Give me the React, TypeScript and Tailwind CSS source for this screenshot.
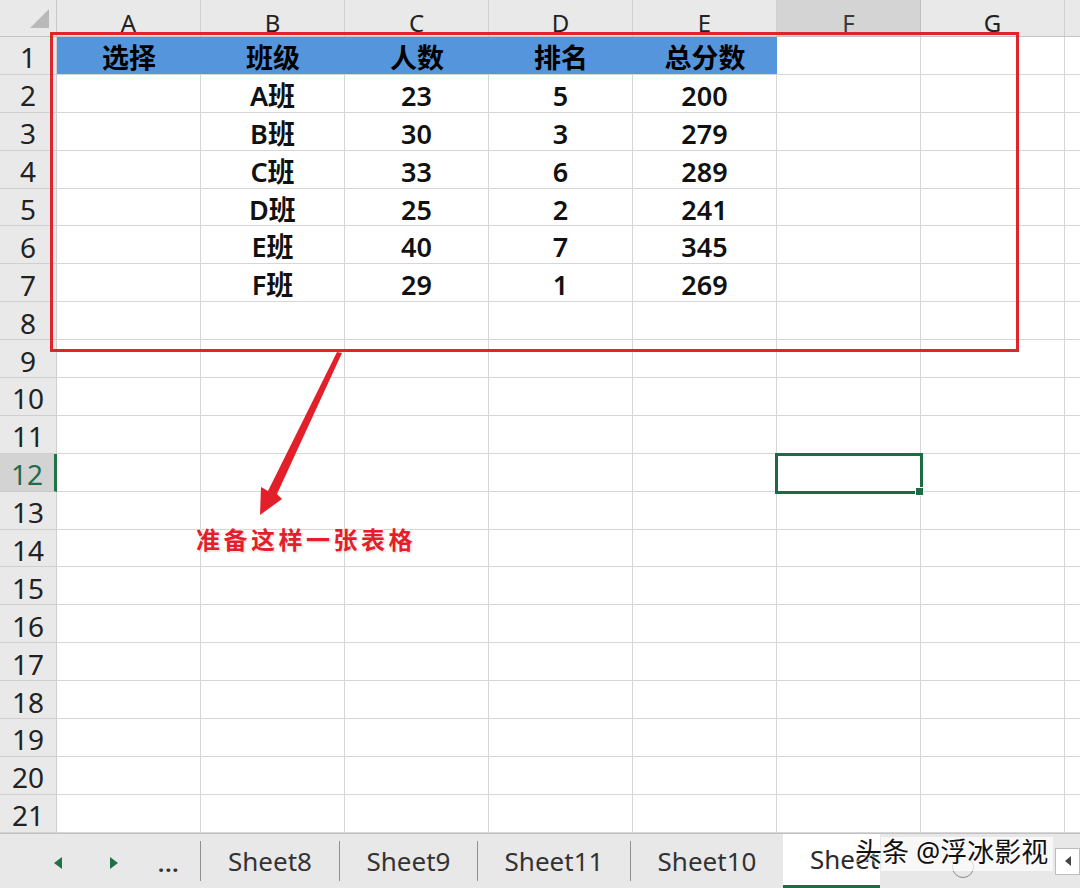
const COLS = ["A", "B", "C", "D", "E", "F", "G"];

const DATA: string[][] = [
  ["选择", "班级", "人数", "排名", "总分数"],
  ["", "A班", "23", "5", "200"],
  ["", "B班", "30", "3", "279"],
  ["", "C班", "33", "6", "289"],
  ["", "D班", "25", "2", "241"],
  ["", "E班", "40", "7", "345"],
  ["", "F班", "29", "1", "269"],
];

const ROWS = Array.from({ length: 21 }, (_, i) => i + 1);

function HeaderRow() {
  return (
    <div className="flex h-[37px] border-b border-[#c4c4c4] bg-[#e9e9e9]">
      <div className="relative w-[57px] shrink-0 border-r border-[#c8c8c8]">
        <svg className="absolute left-[30px] top-[9px]" width="19" height="19" viewBox="0 0 19 19">
          <polygon points="19,0 19,19 0,19" fill="#b9b9b9" />
        </svg>
      </div>
      {COLS.map((c) => (
        <div
          key={c}
          className={
            c === "F"
              ? "flex w-[144px] shrink-0 items-end justify-center border-r border-[#c0c0c0] bg-[#d4d4d4] pb-[1px] text-[24px] leading-none text-[#3a3a3a]"
              : "flex w-[144px] shrink-0 items-end justify-center border-r border-[#d0d0d0] pb-[1px] text-[24px] leading-none text-[#222]"
          }
        >
          {c}
        </div>
      ))}
      <div className="flex-1" />
    </div>
  );
}

function SheetRow({ n }: { n: number }) {
  const values = DATA[n - 1] ?? [];
  const isHead = n === 1;
  const active = n === 12;
  return (
    <div className="flex h-[37.9px]">
      <div
        className={
          active
            ? "flex w-[57px] shrink-0 items-center justify-center border-b border-r-[3px] border-b-[#c8c8c8] border-r-[#217346] bg-[#d3d3d3] pt-[4px] text-[28px] leading-none text-[#1f6b4a]"
            : "flex w-[57px] shrink-0 items-center justify-center border-b border-r border-[#cfcfcf] bg-[#e9e9e9] pt-[4px] text-[28px] leading-none text-[#222]"
        }
      >
        {n}
      </div>
      {COLS.map((c, i) => {
        const v = values[i] ?? "";
        const blue = isHead && i < 5;
        return (
          <div
            key={c}
            className={
              blue
                ? "flex w-[144px] shrink-0 items-center justify-center border-b border-[#d6d6d6] bg-[#5595db] pt-[4px] text-[27px] font-bold leading-none text-black"
                : "flex w-[144px] shrink-0 items-center justify-center border-b border-r border-[#d6d6d6] pt-[4px] text-[27px] font-semibold leading-none text-[#111]"
            }
          >
            {v}
          </div>
        );
      })}
      <div className="flex-1 border-b border-[#d6d6d6]" />
    </div>
  );
}

function TabBar() {
  const tabs = [
    { name: "Sheet8", w: "w-[139px]" },
    { name: "Sheet9", w: "w-[138px]" },
    { name: "Sheet11", w: "w-[153px]" },
    { name: "Sheet10", w: "w-[153px]" },
  ];
  return (
    <div className="flex h-[55px] border-t border-[#c2c2c2] bg-[#e8e8e8] text-[#333]">
      <div className="flex w-[200px] shrink-0 items-center pt-[4px]">
        <svg className="ml-[54px]" width="8" height="12" viewBox="0 0 8 12">
          <polygon points="8,0 8,12 0,6" fill="#21704a" />
        </svg>
        <svg className="ml-[48px]" width="8" height="12" viewBox="0 0 8 12">
          <polygon points="0,0 0,12 8,6" fill="#21704a" />
        </svg>
        <span className="ml-[40px] text-[22px] font-bold leading-none tracking-[1px]">...</span>
      </div>
      {tabs.map((t) => (
        <div key={t.name} className={`flex ${t.w} shrink-0 items-center`}>
          <div className="h-[40px] w-[1px] bg-[#8f8f8f]" />
          <div className="flex flex-1 items-center justify-center text-[26px] leading-none">{t.name}</div>
        </div>
      ))}
      <div className="flex w-[97px] shrink-0 flex-col overflow-hidden bg-white">
        <div className="flex flex-1 items-center pl-[27px] text-[26px] leading-none text-[#2b2b2b]">Sheet12</div>
        <div className="h-[3px] bg-[#1d6b45]" />
      </div>
      <div className="relative flex-1">
        <div className="absolute left-[72px] top-[22px] h-[22px] w-[22px] rounded-full border border-[#8a8a8a]" />
        <div className="absolute right-0 top-[14px] flex h-[27px] w-[25px] items-center justify-center border border-[#bdbdbd] bg-white">
          <svg width="6" height="10" viewBox="0 0 6 10">
            <polygon points="6,0 6,10 0,5" fill="#444" />
          </svg>
        </div>
      </div>
    </div>
  );
}

export default function App() {
  return (
    <div className="relative h-[888px] w-[1080px] overflow-hidden bg-white font-['Noto_Sans','Noto_Sans_CJK_SC',sans-serif]">
      <HeaderRow />
      {ROWS.map((n) => (
        <SheetRow key={n} n={n} />
      ))}
      <TabBar />

      {/* red frame around the table */}
      <div className="absolute left-[50px] top-[32px] h-[320px] w-[969px] border-[3px] border-[#e0242c]" />

      {/* arrow */}
      <svg className="absolute left-0 top-0" width="1080" height="888" viewBox="0 0 1080 888">
        <polygon
          points="337,352 342,353 277,494 282,499 260,515 261,487 268,491"
          fill="#e3202a"
        />
      </svg>

      <div className="absolute left-[196px] top-[528px] text-[24px] font-bold leading-none tracking-[3.5px] text-[#e3202a] [text-shadow:0_0_2px_#fff,0_0_3px_#fff,1px_1px_2px_#bbb]">
        准备这样一张表格
      </div>

      {/* selected cell F12 */}
      <div className="absolute left-[775px] top-[453px] h-[41px] w-[148px] border-[3px] border-[#1d6b45]" />
      <div className="absolute left-[915px] top-[487px] h-[9px] w-[9px] border border-white bg-[#1d6b45]" />

      {/* watermark */}
      <div className="absolute left-[881px] top-[837px] h-[34px] w-[172px] bg-white/70" />
      <div className="absolute left-[855px] top-[838px] text-[27px] leading-none text-[#111] [text-shadow:0_0_2px_#fff,0_0_2px_#fff,0_0_3px_#fff]">
        头条 @浮冰影视
      </div>
    </div>
  );
}
